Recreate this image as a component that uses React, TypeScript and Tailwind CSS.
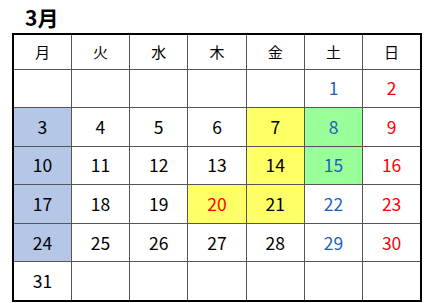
type Cell = { day?: number; bg?: string; color?: string }

const days = ['月', '火', '水', '木', '金', '土', '日']

const BLUE = 'bg-[#b4c7e7]'
const YELLOW = 'bg-[#ffff66]'
const GREEN = 'bg-[#99ff99]'

const sat = 'text-[#1f5fbf]'
const sun = 'text-[#ff0000]'

const rows: Cell[][] = [
  [{}, {}, {}, {}, {}, { day: 1, color: sat }, { day: 2, color: sun }],
  [
    { day: 3, bg: BLUE },
    { day: 4 },
    { day: 5 },
    { day: 6 },
    { day: 7, bg: YELLOW },
    { day: 8, bg: GREEN, color: sat },
    { day: 9, color: sun },
  ],
  [
    { day: 10, bg: BLUE },
    { day: 11 },
    { day: 12 },
    { day: 13 },
    { day: 14, bg: YELLOW },
    { day: 15, bg: GREEN, color: sat },
    { day: 16, color: sun },
  ],
  [
    { day: 17, bg: BLUE },
    { day: 18 },
    { day: 19 },
    { day: 20, bg: YELLOW, color: sun },
    { day: 21, bg: YELLOW },
    { day: 22, color: sat },
    { day: 23, color: sun },
  ],
  [
    { day: 24, bg: BLUE },
    { day: 25 },
    { day: 26 },
    { day: 27 },
    { day: 28 },
    { day: 29, color: sat },
    { day: 30, color: sun },
  ],
  [{ day: 31 }, {}, {}, {}, {}, {}, {}],
]

export default function App() {
  return (
    <div className="w-[426px] h-[303px] bg-white overflow-hidden text-black" style={{ fontFamily: '"Noto Sans CJK JP", "Noto Sans", sans-serif' }}>
      <div className="h-[33px] pl-[25px] pt-[3px] text-[21px] font-bold leading-[28px]">3月</div>
      <table className="ml-[12px] w-[410px] border-collapse border-2 border-black table-fixed">
        <thead>
          <tr className="h-[35px]">
            {days.map((d) => (
              <th key={d} className="border border-[#555] border-t-2 border-t-black text-[15px] font-normal text-center">
                {d}
              </th>
            ))}
          </tr>
        </thead>
        <tbody>
          {rows.map((row, i) => (
            <tr key={i} className="h-[38.6px]">
              {row.map((c, j) => (
                <td
                  key={j}
                  className={`border border-[#555] text-center text-[17.5px] ${c.bg ?? ''} ${c.color ?? ''}`}
                >
                  {c.day ?? ''}
                </td>
              ))}
            </tr>
          ))}
        </tbody>
      </table>
    </div>
  )
}
